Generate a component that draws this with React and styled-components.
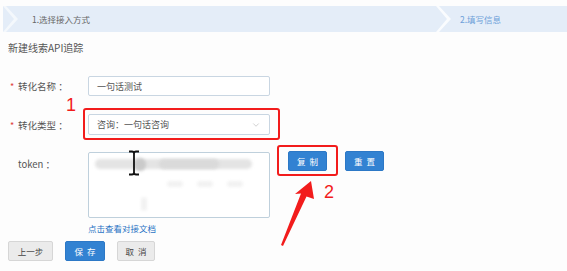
import React from 'react'
import styled, { createGlobalStyle } from 'styled-components'
import { ChevronDown } from 'lucide-react'

const GlobalStyle = createGlobalStyle`
	html, body {
		margin: 0;
		padding: 0;
		background: #fdfdfd;
	}
	body {
		font-family: 'Noto Sans CJK SC', 'Noto Sans', sans-serif;
		color: #555;
	}
`

const Page = styled('div')`
	position: relative;
	width: 567px;
	height: 271px;
	overflow: hidden;
	padding-top: 6px;
	box-sizing: border-box;
`

const Steps = styled('div')`
	position: relative;
	margin-left: 3px;
	height: 26px;
	background: #e4edf8;
	display: flex;
	align-items: center;
	font-size: 8.5px;
`

const Chevron = styled('svg')`
	position: absolute;
	top: 0;
	left: ${({ left }) => left}px;
`

const Step = styled('span')`
	position: absolute;
	left: ${({ left }) => left}px;
	color: ${({ active }) => (active ? '#6d9fd9' : '#666')};
`

const Body = styled('div')`
	padding-left: 8px;
	display: flex;
	flex-direction: column;
`

const Title = styled('div')`
	margin-top: 9px;
	line-height: 14px;
	font-size: 10px;
	color: #555;
`

const Row = styled('div')`
	display: flex;
	align-items: ${({ top }) => (top ? 'flex-start' : 'center')};
	margin-top: ${({ gap }) => gap}px;
`

const Label = styled('div')`
	width: 80px;
	flex-shrink: 0;
	font-size: 9.5px;
	color: #555;
	padding-left: 10px;
	box-sizing: border-box;
	position: relative;
	padding-top: ${({ pt }) => pt || 0}px;

	.star {
		position: absolute;
		left: 2px;
		top: ${({ pt }) => (pt || 0) + 1}px;
		color: #e0413a;
		font-size: 9px;
	}
`

const Field = styled('div')`
	width: 182px;
	height: ${({ h }) => h}px;
	box-sizing: border-box;
	border: 1px solid #c9d6e2;
	border-radius: 2px;
	background: #fff;
	display: flex;
	align-items: center;
	justify-content: space-between;
	padding: 0 8px;
	font-size: 9px;
	color: #555;
`

const TokenBox = styled('div')`
	position: relative;
	width: 182px;
	height: 66px;
	margin-top: 1px;
	box-sizing: border-box;
	border: 1px solid #bfd0dc;
	border-radius: 2px;
	background: #fff;
`

const Blur = styled('div')`
	position: absolute;
	left: ${({ x }) => x}px;
	top: ${({ y }) => y}px;
	width: ${({ w }) => w}px;
	height: ${({ h }) => h}px;
	background: ${({ c }) => c};
	border-radius: 6px;
	filter: blur(1.5px);
`

const Cursor = styled('svg')`
	position: absolute;
	left: 39px;
	top: -3px;
`

const Button = styled('button')`
	height: 20px;
	width: ${({ w }) => w}px;
	margin-left: ${({ ml }) => ml || 0}px;
	border: 1px solid ${({ primary }) => (primary ? '#2c78c6' : '#d6d6d6')};
	background: ${({ primary }) => (primary ? '#3282d2' : '#ebebeb')};
	color: ${({ primary }) => (primary ? '#fff' : '#444')};
	border-radius: 2px;
	font-family: inherit;
	font-size: 8.5px;
	letter-spacing: ${({ spaced }) => (spaced ? 4 : 0)}px;
	text-indent: ${({ spaced }) => (spaced ? 4 : 0)}px;
	padding: 0;
	display: flex;
	align-items: center;
	justify-content: center;
	flex-shrink: 0;
`

const Link = styled('div')`
	margin-left: 80px;
	margin-top: 4px;
	line-height: 12px;
	font-size: 8.5px;
	color: #2a73c4;
`

const Actions = styled('div')`
	display: flex;
	gap: 12px;
	margin-top: 7px;
`

const Mark = styled('div')`
	position: absolute;
	left: ${({ x }) => x}px;
	top: ${({ y }) => y}px;
	width: ${({ w }) => w}px;
	height: ${({ h }) => h}px;
	border: 2.5px solid #f21c1c;
	border-radius: 3px;
	box-sizing: border-box;
`

const Num = styled('div')`
	position: absolute;
	left: ${({ x }) => x}px;
	top: ${({ y }) => y}px;
	font-family: 'Liberation Sans', Arial, sans-serif;
	font-size: 18px;
	line-height: 18px;
	color: #f21c1c;
`

const Overlay = styled('svg')`
	position: absolute;
	left: 0;
	top: 0;
	pointer-events: none;
`

const StepChevron = ({ left, fill }) => (
	<Chevron left={left} width="16" height="26" viewBox="0 0 16 26">
		<polygon points="0,0 3,0 15,13 3,26 0,26 11,13" fill={fill} />
	</Chevron>
)

const App = () => {
	return (
		<Page>
			<GlobalStyle />
			<Steps>
				<StepChevron left={0} fill="#f4f8fc" />
				<Step left={29}>1.选择接入方式</Step>
				<StepChevron left={433} fill="#fafcfe" />
				<Step left={457} active>
					2.填写信息
				</Step>
			</Steps>

			<Body>
				<Title>新建线索API追踪</Title>

				<Row gap={21}>
					<Label>
						<span className="star">*</span>转化名称 ：
					</Label>
					<Field h={20}>一句话测试</Field>
				</Row>

				<Row gap={18}>
					<Label>
						<span className="star">*</span>转化类型 ：
					</Label>
					<Field h={21}>
						咨询：一句话咨询
						<ChevronDown size={10} color="#b5b5b5" strokeWidth={1.5} />
					</Field>
				</Row>

				<Row gap={16} top>
					<Label pt={6}>token ：</Label>
					<TokenBox>
						<Blur x={6} y={6} w={157} h={10} c="#e4e4e4" />
						<Blur x={45} y={5} w={12} h={13} c="#cacaca" />
						<Blur x={70} y={6} w={60} h={10} c="#dadada" />
						<Blur x={78} y={28} w={16} h={6} c="#f2f2f2" />
						<Blur x={108} y={28} w={16} h={6} c="#f2f2f2" />
						<Blur x={138} y={28} w={16} h={6} c="#f2f2f2" />
						<Blur x={52} y={44} w={6} h={14} c="#f2f2f2" />
						<Cursor width="12" height="26" viewBox="0 0 12 26">
							<path d="M1 1.5 H4 Q6 1.5 6 3.5 V22.5 Q6 24.5 4 24.5 H1 M11 1.5 H8 Q6 1.5 6 3.5 M6 22.5 Q6 24.5 8 24.5 H11" fill="none" stroke="#111" strokeWidth="1.8" />
						</Cursor>
					</TokenBox>
					<Button primary spaced w={39} ml={18}>
						复制
					</Button>
					<Button primary spaced w={39} ml={18}>
						重置
					</Button>
				</Row>

				<Link>点击查看对接文档</Link>

				<Actions>
					<Button w={45}>上一步</Button>
					<Button primary spaced w={40}>
						保存
					</Button>
					<Button spaced w={38}>
						取消
					</Button>
				</Actions>
			</Body>

			<Mark x={83} y={108} w={197} h={32} />
			<Mark x={277} y={145} w={61} h={31} />
			<Num x={66} y={96}>1</Num>
			<Num x={324} y={183}>2</Num>
			<Overlay width="567" height="271">
				<polygon points="311,181 314,199 306.5,196.5 283,246 281,245 301,193.5 295,194" fill="#f21c1c" />
			</Overlay>
		</Page>
	)
}

export default App
